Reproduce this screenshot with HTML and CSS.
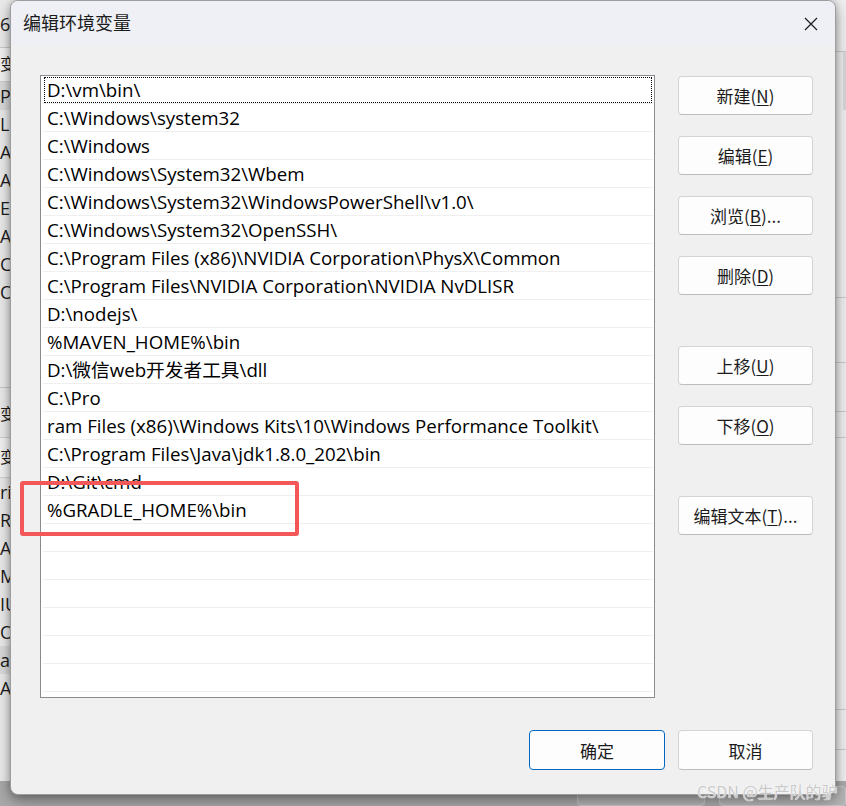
FILE: index.html
```html
<!DOCTYPE html>
<html lang="zh-CN">
<head>
    <meta charset="UTF-8" />
    <title>编辑环境变量</title>
    <link rel="stylesheet" href="styles.css">
</head>
<body>
<div class="desk">
    <!-- window behind the dialog, only its edges show -->
    <div class="behind">
        <div class="bmain">
            <div class="bleft">
                <div class="btop">6</div>
                <div class="bhead">变</div>
                <div class="brow sel">P</div>
                <div class="brow">LI</div>
                <div class="brow">A</div>
                <div class="brow">A</div>
                <div class="brow">E</div>
                <div class="brow">A</div>
                <div class="brow">C</div>
                <div class="brow">O</div>
                <div class="bgap"></div>
                <div class="blabel">变</div>
                <div class="bhead2">变</div>
                <div class="brow">ri</div>
                <div class="brow">R</div>
                <div class="brow">A</div>
                <div class="brow">M</div>
                <div class="brow">IU</div>
                <div class="brow">O</div>
                <div class="brow sel">at</div>
                <div class="brow">A</div>
            </div>
            <div class="bright">
                <div class="rline h52"></div>
                <div class="rbar"></div>
                <div class="rline h188"></div>
                <div class="rline h65"></div>
                <div class="rline h49"></div>
                <div class="rline h26"></div>
                <div class="rline h272"></div>
                <div class="rline h40"></div>
            </div>
        </div>
        <div class="bbottom">
            <span class="bbtn"></span>
            <span class="bbtn"></span>
        </div>
    </div>

    <div class="dialog">
        <div class="titlebar">
            <span class="title">编辑环境变量</span>
            <span class="close">
                <svg width="14" height="14" viewBox="0 0 14 14"><path d="M1 1 L13 13 M13 1 L1 13" stroke="#1b1b1b" stroke-width="1.2" fill="none"/></svg>
            </span>
        </div>
        <div class="content">
            <div class="main">
                <div class="list">
                    <div class="row focus">D:\vm\bin\</div>
                    <div class="row">C:\Windows\system32</div>
                    <div class="row">C:\Windows</div>
                    <div class="row">C:\Windows\System32\Wbem</div>
                    <div class="row">C:\Windows\System32\WindowsPowerShell\v1.0\</div>
                    <div class="row">C:\Windows\System32\OpenSSH\</div>
                    <div class="row">C:\Program Files (x86)\NVIDIA Corporation\PhysX\Common</div>
                    <div class="row">C:\Program Files\NVIDIA Corporation\NVIDIA NvDLISR</div>
                    <div class="row">D:\nodejs\</div>
                    <div class="row">%MAVEN_HOME%\bin</div>
                    <div class="row">D:\微信web开发者工具\dll</div>
                    <div class="row">C:\Pro</div>
                    <div class="row">ram Files (x86)\Windows Kits\10\Windows Performance Toolkit\</div>
                    <div class="row">C:\Program Files\Java\jdk1.8.0_202\bin</div>
                    <div class="row">D:\Git\cmd</div>
                    <div class="row">%GRADLE_HOME%\bin</div>
                    <div class="row"></div>
                    <div class="row"></div>
                    <div class="row"></div>
                    <div class="row"></div>
                    <div class="row"></div>
                    <div class="row"></div>
                    <div class="row"></div>
                </div>
                <div class="side">
                    <button class="btn">新建(<u>N</u>)</button>
                    <button class="btn">编辑(<u>E</u>)</button>
                    <button class="btn">浏览(<u>B</u>)...</button>
                    <button class="btn">删除(<u>D</u>)</button>
                    <button class="btn gap">上移(<u>U</u>)</button>
                    <button class="btn">下移(<u>O</u>)</button>
                    <button class="btn gap">编辑文本(<u>T</u>)...</button>
                </div>
            </div>
            <div class="footer">
                <button class="btn ok">确定</button>
                <button class="btn">取消</button>
            </div>
        </div>
    </div>

    <div class="mark"></div>
    <div class="watermark">CSDN @生产队的驴</div>
</div>
</body>
</html>
```

FILE: styles.css
```css
* {margin:0; padding:0; box-sizing: border-box;}
body {
    width: 846px;
    height: 806px;
    overflow: hidden;
    background: #b8b8b8;
    font-family: "Noto Sans CJK SC", "Noto Sans", sans-serif;
}
.desk {
    position: relative;
    width: 846px;
    height: 806px;
    overflow: hidden;
}

/* window behind */
.behind {
    position: absolute;
    left: 0;
    top: 0;
    width: 846px;
    height: 806px;
    display: flex;
    flex-direction: column;
    background: #e9e9e9;
}
.bmain {
    height: 795px;
    display: flex;
    justify-content: space-between;
}
.bleft {
    width: 10px;
    overflow: hidden;
    font-size: 18px;
    color: #1b1b1b;
    white-space: nowrap;
    font-family: "Open Sans", "Noto Sans CJK SC", sans-serif;
}
.btop {
    height: 48px;
    line-height: 48px;
    border-bottom: 1px solid #c9c9c9;
}
.bhead {
    height: 34px;
    line-height: 32px;
    font-size: 16px;
    border-bottom: 1px solid #cfcfcf;
    background: #f1f1f1;
}
.brow {
    height: 28px;
    line-height: 28px;
}
.brow.sel {
    background: #d9d9d9;
}
.bgap {
    height: 82px;
    border-bottom: 1px solid #c6c6c6;
}
.blabel {
    height: 50px;
    line-height: 52px;
    font-size: 16px;
    border-bottom: 1px solid #cdcdcd;
}
.bhead2 {
    height: 40px;
    line-height: 38px;
    font-size: 16px;
    background: #f1f1f1;
    border-bottom: 1px solid #cfcfcf;
}
.bright {
    width: 10px;
    background: #ededed;
}
.rline {
    border-bottom: 1px solid #c8c8c8;
}
.h52 {height: 52px;}
.h188 {height: 188px;}
.h65 {height: 65px;}
.h49 {height: 49px;}
.h26 {height: 26px;}
.h272 {height: 272px;}
.h40 {height: 40px;}
.rbar {
    height: 58px;
    width: 3px;
    margin-left: 7px;
    background: #d6d6d6;
}
.bbottom {
    flex: 1;
    background: #a9a9a9;
    display: flex;
    gap: 14px;
    padding: 5px 0 0 577px;
}
.bbtn {
    width: 134px;
    height: 20px;
    border: 1px solid #c6c6c6;
    border-radius: 4px;
    background: #b3b3b3;
}

/* dialog */
.dialog {
    position: absolute;
    left: 10px;
    top: 0;
    width: 826px;
    height: 795px;
    border: 1px solid #9d9d9d;
    border-radius: 8px;
    background: #f0f0f0;
    overflow: hidden;
    box-shadow: 0 6px 14px rgba(0,0,0,0.35), 0 0 6px rgba(0,0,0,0.18);
}
.titlebar {
    height: 43px;
    background: #eef0f5;
    display: flex;
    align-items: center;
    justify-content: space-between;
    padding: 0 17px 0 12px;
}
.title {
    font-size: 18px;
    color: #1b1b1b;
    margin-top: -1px;
}
.close {
    display: flex;
    margin-top: 2px;
}
.content {
    padding: 31px 22px 0 29px;
}
.main {
    display: flex;
    gap: 23px;
}
.list {
    width: 615px;
    height: 623px;
    border: 1px solid #898c90;
    background: #fff;
    padding: 0 1px 0 2px;
    overflow: hidden;
}
.row {
    height: 28px;
    line-height: 27px;
    border-bottom: 1px solid #efefef;
    padding-left: 4px;
    font-family: "Open Sans", "Noto Sans CJK SC", sans-serif;
    font-size: 18.7px;
    color: #000;
    white-space: nowrap;
}
.row.focus {
    outline: 1px dotted #000;
    outline-offset: -2px;
}
.side {
    width: 135px;
    display: flex;
    flex-direction: column;
    gap: 21px;
    padding-top: 1px;
}
.btn {
    width: 135px;
    height: 39px;
    background: #fdfdfd;
    border: 1px solid #d4d4d4;
    border-bottom-color: #bdbdbd;
    border-radius: 4px;
    font-family: "Noto Sans CJK SC", sans-serif;
    font-size: 17px;
    color: #1b1b1b;
    display: flex;
    align-items: center;
    justify-content: center;
}
.btn u {
    text-underline-offset: 2px;
}
.side .gap {
    margin-top: 30px;
}
.footer {
    display: flex;
    justify-content: flex-end;
    gap: 13px;
    margin-top: 32px;
}
.footer .btn {
    height: 40px;
}
.footer .ok {
    width: 136px;
    border: 1px solid #0067c0;
}

/* annotation over the list */
.mark {
    position: absolute;
    left: 20px;
    top: 481px;
    width: 279px;
    height: 55px;
    border: 4px solid #f35757;
    border-radius: 3px;
}
.watermark {
    position: absolute;
    left: 697px;
    top: 779px;
    font-size: 16px;
    color: #c9c9c9;
    white-space: nowrap;
    text-shadow: 0 0 1px #fff, 0 0 1px #fff;
}
```
